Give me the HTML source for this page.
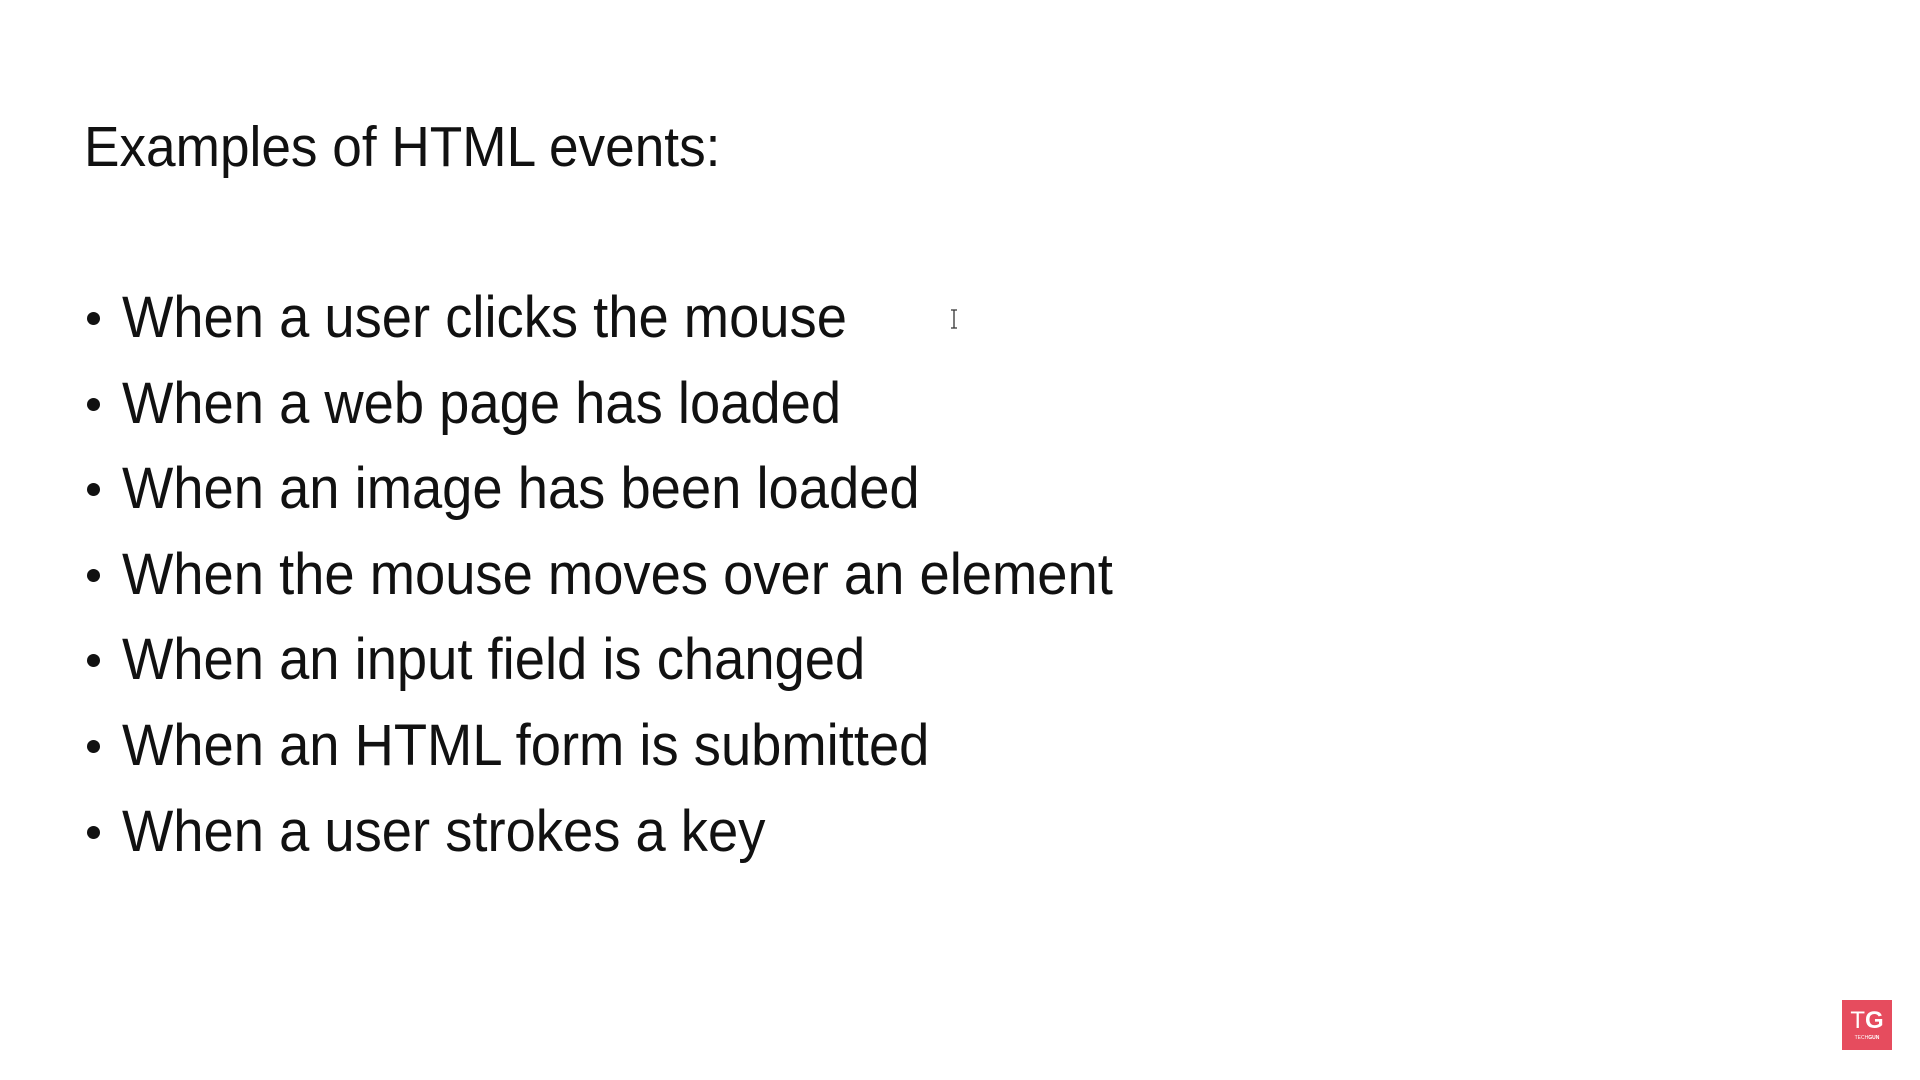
<!DOCTYPE html>
<html><head><style>
html,body{margin:0;padding:0;background:#fff;width:1920px;height:1080px;overflow:hidden;position:relative;font-family:"Liberation Sans",sans-serif;color:#111}
.t{position:absolute;line-height:1;white-space:nowrap;transform-origin:0 0}
.h{left:84px;top:119px;font-size:57px;transform:scaleX(0.933)}
.i{left:122px;font-size:58px;transform:scaleX(0.937)}
.b{position:absolute;left:87px;width:13px;height:13px;border-radius:50%;background:#111}
.logo{position:absolute;left:1842px;top:1000px;width:50px;height:50px;background:#e64c5e;color:#fff;text-align:center}
</style></head><body>
<div class="t h">Examples of HTML events:</div>
<div class="b" style="top:312px"></div><div class="t i" style="top:289px">When a user clicks the mouse</div>
<div class="b" style="top:398px"></div><div class="t i" style="top:375px">When a web page has loaded</div>
<div class="b" style="top:483px"></div><div class="t i" style="top:460px">When an image has been loaded</div>
<div class="b" style="top:569px"></div><div class="t i" style="top:546px">When the mouse moves over an element</div>
<div class="b" style="top:654px"></div><div class="t i" style="top:631px">When an input field is changed</div>
<div class="b" style="top:740px"></div><div class="t i" style="top:717px">When an HTML form is submitted</div>
<div class="b" style="top:826px"></div><div class="t i" style="top:803px">When a user strokes a key</div>
<svg style="position:absolute;left:949px;top:309px" width="10" height="20"><path d="M2 1h6M5 1v18M2 19h6" stroke="#333" stroke-width="1.3" fill="none"/></svg>
<div class="logo"><div style="font-size:24px;line-height:24px;margin-top:9px;font-weight:normal">T<b>G</b></div><div style="font-size:5px;line-height:6px;margin-top:2px">TECH<b>GUN</b></div></div>
</body></html>
